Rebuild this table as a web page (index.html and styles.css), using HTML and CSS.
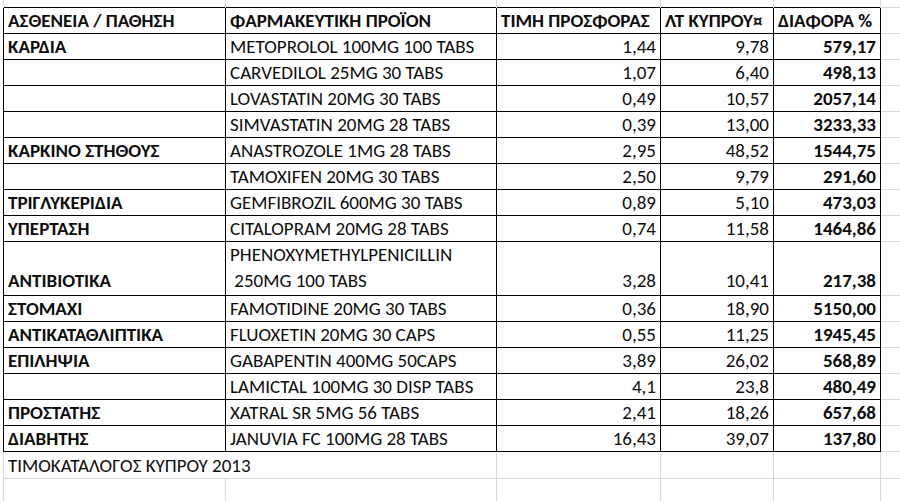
FILE: index.html
```html
<!DOCTYPE html>
<html lang="el">
<head>
<meta charset="utf-8">
<title>Τιμοκατάλογος</title>
<link rel="stylesheet" href="styles.css">
</head>
<body>
<table class="sheet">
  <colgroup>
    <col class="ca"><col class="cb"><col class="cc"><col class="cd"><col class="ce"><col class="cf">
  </colgroup>
  <tbody>
    <tr class="r-top"><td></td><td></td><td></td><td></td><td></td><td></td></tr>
    <tr class="r-head">
      <td class="d b">ΑΣΘΕΝΕΙΑ / ΠΑΘΗΣΗ</td>
      <td class="d b">ΦΑΡΜΑΚΕΥΤΙΚΗ ΠΡΟΪΟΝ</td>
      <td class="d b">ΤΙΜΗ ΠΡΟΣΦΟΡΑΣ</td>
      <td class="d b">ΛΤ ΚΥΠΡΟΥ¤</td>
      <td class="d b">ΔΙΑΦΟΡΑ %</td>
      <td></td>
    </tr>
    <tr class="r"><td class="d b">ΚΑΡΔΙΑ</td><td class="d">METOPROLOL 100MG 100 TABS</td><td class="d n">1,44</td><td class="d n">9,78</td><td class="d n b">579,17</td><td></td></tr>
    <tr class="r"><td class="d"></td><td class="d">CARVEDILOL 25MG 30 TABS</td><td class="d n">1,07</td><td class="d n">6,40</td><td class="d n b">498,13</td><td></td></tr>
    <tr class="r"><td class="d"></td><td class="d">LOVASTATIN 20MG 30 TABS</td><td class="d n">0,49</td><td class="d n">10,57</td><td class="d n b">2057,14</td><td></td></tr>
    <tr class="r"><td class="d"></td><td class="d">SIMVASTATIN 20MG 28 TABS</td><td class="d n">0,39</td><td class="d n">13,00</td><td class="d n b">3233,33</td><td></td></tr>
    <tr class="r"><td class="d b">ΚΑΡΚΙΝΟ ΣΤΗΘΟΥΣ</td><td class="d">ANASTROZOLE 1MG 28 TABS</td><td class="d n">2,95</td><td class="d n">48,52</td><td class="d n b">1544,75</td><td></td></tr>
    <tr class="r"><td class="d"></td><td class="d">TAMOXIFEN 20MG 30 TABS</td><td class="d n">2,50</td><td class="d n">9,79</td><td class="d n b">291,60</td><td></td></tr>
    <tr class="r"><td class="d b">ΤΡΙΓΛΥΚΕΡΙΔΙΑ</td><td class="d">GEMFIBROZIL 600MG 30 TABS</td><td class="d n">0,89</td><td class="d n">5,10</td><td class="d n b">473,03</td><td></td></tr>
    <tr class="r"><td class="d b">ΥΠΕΡΤΑΣΗ</td><td class="d">CITALOPRAM 20MG 28 TABS</td><td class="d n">0,74</td><td class="d n">11,58</td><td class="d n b">1464,86</td><td></td></tr>
    <tr class="r2"><td class="d b">ΑΝΤΙΒΙΟΤΙΚΑ</td><td class="d wrap">PHENOXYMETHYLPENICILLIN<br>&nbsp;250MG 100 TABS</td><td class="d n">3,28</td><td class="d n">10,41</td><td class="d n b">217,38</td><td></td></tr>
    <tr class="r"><td class="d b">ΣΤΟΜΑΧΙ</td><td class="d">FAMOTIDINE 20MG 30 TABS</td><td class="d n">0,36</td><td class="d n">18,90</td><td class="d n b">5150,00</td><td></td></tr>
    <tr class="r"><td class="d b">ΑΝΤΙΚΑΤΑΘΛΙΠΤΙΚΑ</td><td class="d">FLUOXETIN 20MG 30 CAPS</td><td class="d n">0,55</td><td class="d n">11,25</td><td class="d n b">1945,45</td><td></td></tr>
    <tr class="r"><td class="d b">ΕΠΙΛΗΨΙΑ</td><td class="d">GABAPENTIN 400MG 50CAPS</td><td class="d n">3,89</td><td class="d n">26,02</td><td class="d n b">568,89</td><td></td></tr>
    <tr class="r"><td class="d"></td><td class="d">LAMICTAL 100MG 30 DISP TABS</td><td class="d n">4,1</td><td class="d n">23,8</td><td class="d n b">480,49</td><td></td></tr>
    <tr class="r"><td class="d b">ΠΡΟΣΤΑΤΗΣ</td><td class="d">XATRAL SR 5MG 56 TABS</td><td class="d n">2,41</td><td class="d n">18,26</td><td class="d n b">657,68</td><td></td></tr>
    <tr class="r"><td class="d b">ΔΙΑΒΗΤΗΣ</td><td class="d">JANUVIA FC 100MG 28 TABS</td><td class="d n">16,43</td><td class="d n">39,07</td><td class="d n b">137,80</td><td></td></tr>
    <tr class="r-foot"><td colspan="2">ΤΙΜΟΚΑΤΑΛΟΓΟΣ ΚΥΠΡΟΥ 2013</td><td></td><td></td><td></td><td></td></tr>
    <tr class="r"><td></td><td></td><td></td><td></td><td></td><td></td></tr>
  </tbody>
</table>
</body>
</html>
```
FILE: styles.css
```css
html, body {
  margin: 0;
  padding: 0;
  background: #fff;
  overflow: hidden;
}

.sheet {
  border-collapse: collapse;
  table-layout: fixed;
  width: 940px;
  margin-left: 3px;
  margin-top: -1px;
  font-family: Carlito, Calibri, "Open Sans", sans-serif;
  font-size: 19px;
  color: #0d0d0d;
}

.ca { width: 222px; }
.cb { width: 271px; }
.cc { width: 164px; }
.cd { width: 113px; }
.ce { width: 107px; }
.cf { width: 63px; }

.sheet td {
  border: 1px solid #d9d9d9;
  padding: 0 4px 1px 4px;
  vertical-align: bottom;
  white-space: nowrap;
  overflow: hidden;
  line-height: 23px;
}

.r-top td {
  height: 8px;
  border-top: none;
  border-bottom: none;
  padding: 0;
}

.r-head td { height: 25px; vertical-align: middle; padding-bottom: 0; }
.r td { height: 24px; }
.r2 td { height: 50px; line-height: 26px; }
.r-foot td { height: 25px; }

.sheet td.d {
  border: 1px solid #000;
}

.b { font-weight: bold; }
.n { text-align: right; }
.wrap { white-space: normal; }
```
